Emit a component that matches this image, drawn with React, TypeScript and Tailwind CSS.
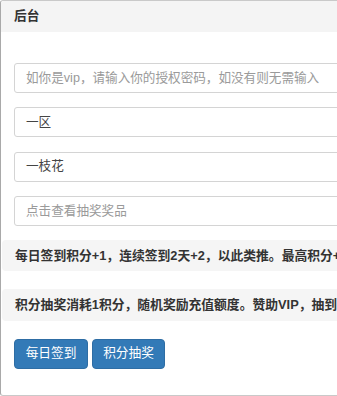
import React from "react";

const font = { fontFamily: "'Liberation Sans', 'Noto Sans CJK SC', sans-serif" };

export default function App() {
  return (
    <div className="w-[337px] h-[396px] overflow-hidden bg-white" style={font}>
      <div className="w-[420px] h-[396px] border border-[#c9c9c9] border-l-[#a9a9a9] rounded-[3px] bg-white flex flex-col">
        <div className="h-[31px] bg-[#f4f4f4] flex items-center pl-[13px] rounded-tl-[3px]">
          <span className="text-[12.7px] font-bold text-[#333]">后台</span>
        </div>
        <div className="flex flex-col pt-[31px]">
          <div className="flex flex-col gap-[14.33px] pl-[13px]">
            <div className="h-[30px] border border-[#d4d4d4] rounded-[3px] flex items-center pl-[11px] text-[12.6px] text-[#9a9a9a] whitespace-nowrap">
              如你是vip，请输入你的授权密码，如没有则无需输入
            </div>
            <div className="h-[30px] border border-[#d4d4d4] rounded-[3px] flex items-center pl-[11px] text-[12.6px] text-[#444]">
              一区
            </div>
            <div className="h-[30px] border border-[#d4d4d4] rounded-[3px] flex items-center pl-[11px] text-[12.6px] text-[#444]">
              一枝花
            </div>
            <div className="h-[30px] border border-[#d4d4d4] rounded-[3px] flex items-center pl-[11px] text-[12.6px] text-[#9a9a9a]">
              点击查看抽奖奖品
            </div>
          </div>
          <div className="mt-[14px] ml-[1px] h-[31px] bg-[#f5f5f5] rounded-[4px] flex items-center pl-[13px] whitespace-nowrap overflow-hidden">
            <span className="text-[12.8px] font-bold text-[#333]">
              每日签到积分+1，连续签到2天+2，以此类推。最高积分+5
            </span>
          </div>
          <div className="mt-[18px] ml-[1px] h-[32px] bg-[#f5f5f5] rounded-[4px] flex items-center pl-[13px] whitespace-nowrap overflow-hidden">
            <span className="text-[12.8px] font-bold text-[#333]">
              积分抽奖消耗1积分，随机奖励充值额度。赞助VIP，抽到高额奖励
            </span>
          </div>
          <div className="mt-[18px] pl-[13px] flex gap-[4px]">
            <button className="h-[30px] w-[74px] bg-[#337ab7] border border-[#2e6da4] rounded-[4px] text-white text-[12.7px] flex items-center justify-center">
              每日签到
            </button>
            <button className="h-[30px] w-[73px] bg-[#337ab7] border border-[#2e6da4] rounded-[4px] text-white text-[12.7px] flex items-center justify-center">
              积分抽奖
            </button>
          </div>
        </div>
      </div>
    </div>
  );
}
